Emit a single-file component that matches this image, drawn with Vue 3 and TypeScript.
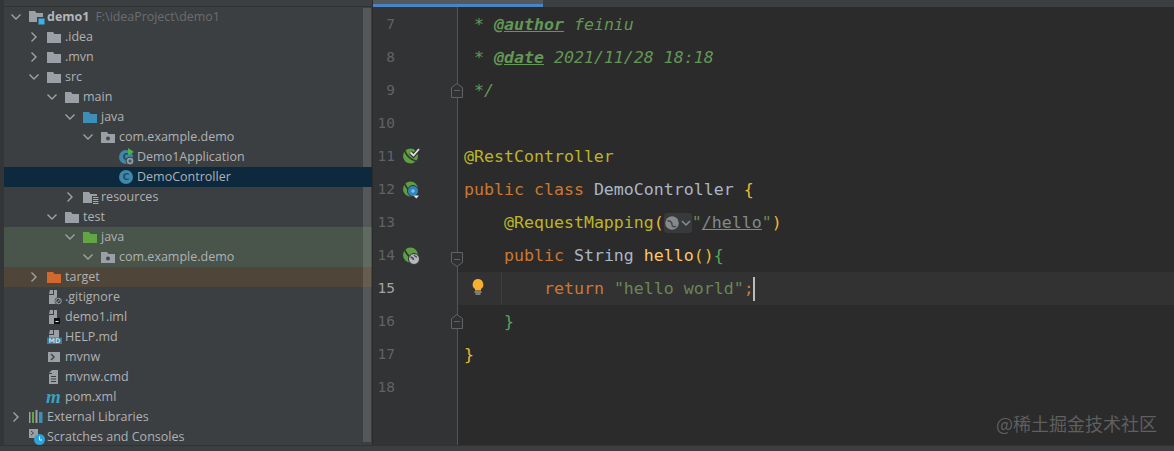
<script setup lang="ts">
interface Row { name: string; depth: number; icon: string; open?: boolean; chev?: boolean; hint?: string; cls?: string }
interface Tok { t: string; c: string }
interface Line { n: number; toks: Tok[]; bean?: string; fold?: string; current?: boolean; bulb?: boolean }

const rows: Row[] = [
  { name: 'demo1', depth: 0, icon: 'module', chev: true, open: true, hint: 'F:\\ideaProject\\demo1', cls: 'root-row' },
  { name: '.idea', depth: 1, icon: 'folder', chev: true },
  { name: '.mvn', depth: 1, icon: 'folder', chev: true },
  { name: 'src', depth: 1, icon: 'folder', chev: true, open: true },
  { name: 'main', depth: 2, icon: 'folder', chev: true, open: true },
  { name: 'java', depth: 3, icon: 'blue', chev: true, open: true },
  { name: 'com.example.demo', depth: 4, icon: 'package', chev: true, open: true },
  { name: 'Demo1Application', depth: 5, icon: 'app' },
  { name: 'DemoController', depth: 5, icon: 'class', cls: 'selected' },
  { name: 'resources', depth: 3, icon: 'resources', chev: true },
  { name: 'test', depth: 2, icon: 'folder', chev: true, open: true },
  { name: 'java', depth: 3, icon: 'green', chev: true, open: true, cls: 'tint-green' },
  { name: 'com.example.demo', depth: 4, icon: 'package', chev: true, open: true, cls: 'tint-green' },
  { name: 'target', depth: 1, icon: 'orange', chev: true, cls: 'tint-orange' },
  { name: '.gitignore', depth: 1, icon: 'ignore' },
  { name: 'demo1.iml', depth: 1, icon: 'iml' },
  { name: 'HELP.md', depth: 1, icon: 'md' },
  { name: 'mvnw', depth: 1, icon: 'script' },
  { name: 'mvnw.cmd', depth: 1, icon: 'text' },
  { name: 'pom.xml', depth: 1, icon: 'pom' },
  { name: 'External Libraries', depth: 0, icon: 'libs', chev: true },
  { name: 'Scratches and Consoles', depth: 0, icon: 'scratch' },
]

const lines: Line[] = [
  { n: 7, toks: [{ t: ' * ', c: 'doc' }, { t: '@author', c: 'tag' }, { t: ' feiniu', c: 'doc' }] },
  { n: 8, toks: [{ t: ' * ', c: 'doc' }, { t: '@date', c: 'tag' }, { t: ' 2021/11/28 18:18', c: 'doc' }] },
  { n: 9, toks: [{ t: ' */', c: 'doc' }], fold: 'end' },
  { n: 10, toks: [] },
  { n: 11, toks: [{ t: '@RestController', c: 'ann' }], bean: 'check' },
  { n: 12, toks: [{ t: 'public class', c: 'kw' }, { t: ' DemoController ', c: 'pl' }, { t: '{', c: 'br' }], bean: 'down' },
  { n: 13, toks: [{ t: '    ', c: 'pl' }, { t: '@RequestMapping', c: 'ann' }, { t: '(', c: 'br' }, { t: '', c: 'inlay' }, { t: '"', c: 'str' }, { t: '/hello', c: 'url' }, { t: '"', c: 'str' }, { t: ')', c: 'br' }] },
  { n: 14, toks: [{ t: '    ', c: 'pl' }, { t: 'public', c: 'kw' }, { t: ' String ', c: 'pl' }, { t: 'hello', c: 'fn' }, { t: '()', c: 'br' }, { t: '{', c: 'gbr' }], bean: 'globe', fold: 'start' },
  { n: 15, toks: [{ t: '        ', c: 'pl' }, { t: 'return', c: 'kw' }, { t: ' "hello world"', c: 'str' }, { t: ';', c: 'kw' }], current: true, bulb: true },
  { n: 16, toks: [{ t: '    ', c: 'pl' }, { t: '}', c: 'gbr' }], fold: 'end' },
  { n: 17, toks: [{ t: '}', c: 'br' }] },
  { n: 18, toks: [] },
]

const indent = (d: number) => ({ paddingLeft: `${4 + 18 * d}px` })
const folderFill: Record<string, string> = { folder: '#9aa0a5', blue: '#3d8fb5', green: '#62a544', orange: '#d0682f', package: '#9aa0a5', resources: '#9aa0a5' }
</script>

<template>
  <div class="screen">
    <div class="main">
      <aside class="tree">
        <div class="tree-top"></div>
        <div v-for="(r, i) in rows" :key="i" class="row" :class="r.cls" :style="indent(r.depth)">
          <span class="chev">
            <svg v-if="r.chev" width="16" height="16" viewBox="0 0 16 16" fill="none" stroke="#a0a3a5" stroke-width="1.4">
              <path v-if="r.open" d="M3.500 5.500 8 10l4.500-4.500" />
              <path v-else d="M5.500 3.500 10 8l-4.500 4.500" />
            </svg>
          </span>
          <svg class="ico" width="16" height="16" viewBox="0 0 16 16">
            <template v-if="folderFill[r.icon]">
              <path d="M0 3h6l1.500 2H14v9H0z" :fill="folderFill[r.icon]" />
              <circle v-if="r.icon === 'package'" cx="7" cy="9.500" r="2" fill="#43474a" />
              <g v-if="r.icon === 'resources'">
                <path d="M9 7h7v9H9z" fill="#3c3f41" />
                <path d="M10 8.500h5.500M10 10.500h5.500M10 12.500h5.500M10 14.500h5.500" stroke="#e0a63a" stroke-width="1" />
              </g>
            </template>
            <g v-else-if="r.icon === 'module'">
              <path d="M0 2h6l1.500 2H14v9H0z" fill="#9aa0a5" />
              <path d="M8 8h8v8H8z" fill="#3c3f41" />
              <path d="M9.500 9.500h6v6h-6z" fill="#38b4e4" />
            </g>
            <g v-else-if="r.icon === 'class' || r.icon === 'app'">
              <circle cx="7" cy="8" r="7" fill="#3f88a8" />
              <text x="7" y="11" text-anchor="middle" class="c-letter">C</text>
              <g v-if="r.icon === 'app'">
                <path d="M9 -1 15 3l-6 3z" fill="#4fb04a" />
                <circle cx="11" cy="12" r="4" fill="#8b9aa3" stroke="#3c3f41" />
                <circle cx="11" cy="12" r="1.500" fill="#4a5660" />
              </g>
            </g>
            <g v-else-if="r.icon === 'ignore'">
              <path d="M3 1h3v4H2zM7 1h3v14H2V6h5z" fill="#9aa0a5" />
              <circle cx="11.500" cy="12" r="3.800" fill="#3c3f41" />
              <circle cx="11.500" cy="12" r="2.800" fill="none" stroke="#9aa0a5" />
              <path d="m9.500 14 4-4" stroke="#9aa0a5" />
            </g>
            <g v-else-if="r.icon === 'iml'">
              <path d="M3 1h3v4H2zM7 1h3v14H2V6h5z" fill="#9aa0a5" />
              <path d="M7 9h6v6H7z" fill="#111" />
              <path d="M8.500 12.500h3" stroke="#eee" stroke-width="1" />
            </g>
            <g v-else-if="r.icon === 'md'">
              <path d="M3 1h3v4H2zM7 1h5v8H2V6h5z" fill="#9aa0a5" />
              <path d="M0 8.500h15V15H0z" fill="#2f7f9f" />
              <text x="7.500" y="14.200" text-anchor="middle" class="md-letter">MD</text>
            </g>
            <g v-else-if="r.icon === 'script'">
              <path d="M1 3h12v10H1z" fill="#9aa0a5" />
              <path d="m4 5 3 3-3 3" fill="none" stroke="#43474a" stroke-width="1.500" />
            </g>
            <g v-else-if="r.icon === 'text'">
              <path d="M5 1h6v14H2V5h3z" fill="#9aa0a5" />
              <path d="M2 4l3-3v3z" fill="#9aa0a5" />
              <path d="M4 7.500h5M4 10h5M4 12.500h5" stroke="#3c3f41" />
            </g>
            <text v-else-if="r.icon === 'pom'" x="-1" y="13.500" class="m-letter">m</text>
            <g v-else-if="r.icon === 'libs'">
              <path d="M0 3h1.500v11H0z" fill="#9aa0a5" />
              <path d="M3 3h2v11H3z" fill="#62a544" />
              <path d="M6.500 1h2v13h-2z" fill="#9aa0a5" />
              <path d="M10 3h3.500v11H10z" fill="#3d8fb5" />
            </g>
            <g v-else-if="r.icon === 'scratch'">
              <path d="M0 0h9v9H0z" fill="#9aa0a5" />
              <path d="m2 2 2.500 2L2 6" fill="none" stroke="#43474a" />
              <circle cx="10.500" cy="10.500" r="5.500" fill="#2fa3dc" />
              <path d="M10.500 7.500v3.500h2.500" fill="none" stroke="#dff" />
            </g>
          </svg>
          <span class="name">{{ r.name }}</span>
          <span v-if="r.hint" class="hint">{{ r.hint }}</span>
        </div>
        <div class="scrollbar"></div>
      </aside>

      <section class="editor">
        <div class="tabs"><div class="tab"></div></div>
        <div class="code">
          <div v-for="l in lines" :key="l.n" class="line" :class="{ current: l.current }">
            <div class="gutter">
              <span class="num">{{ l.n }}</span>
              <svg v-if="l.bean" class="bean" width="18" height="18" viewBox="0 0 18 18">
                <circle cx="8.500" cy="8" r="7.500" fill="#5f9f42" />
                <path d="M2.500 2.500c2 5 6 9 12 11" fill="none" stroke="#2f3a2c" stroke-width="1.800" />
                <g v-if="l.bean === 'check'">
                  <path d="m8.500 4.500 3 3 5.500-6.500" fill="none" stroke="#313335" stroke-width="4" />
                  <path d="m8.500 4.500 3 3 5.500-6.500" fill="none" stroke="#e4e4e4" stroke-width="1.800" />
                </g>
                <g v-if="l.bean === 'down'">
                  <circle cx="11" cy="10" r="5.500" fill="#2f86bd" stroke="#313335" />
                  <circle cx="11" cy="10" r="1.800" fill="#7fc0e8" />
                  <path d="m11.500 14.500 5.500 0-2.700 3z" fill="#eee" />
                </g>
                <g v-if="l.bean === 'globe'">
                  <circle cx="12" cy="12" r="5.500" fill="#b4b8bb" stroke="#313335" />
                  <path d="M8.500 10c2 .5 3 1 3 3M12 8c1 1 1.500 2 3 2" fill="none" stroke="#46494b" stroke-width="1.300" />
                </g>
              </svg>
            </div>
            <div class="text">
              <template v-for="(tk, i) in l.toks" :key="i">
                <span v-if="tk.c === 'inlay'" class="inlay">
                  <svg width="28" height="18" viewBox="0 0 28 18">
                    <circle cx="8" cy="9" r="6.800" fill="#85898c" />
                    <path d="M3.500 6.500c3 .5 4.500 1.500 4.500 4s2.500 3 4 1.500" fill="none" stroke="#46494b" stroke-width="1.500" />
                    <path d="m18 7 4 4 4-4" fill="none" stroke="#8b8e90" stroke-width="1.500" />
                  </svg>
                </span>
                <span v-else :class="tk.c">{{ tk.t }}</span>
              </template>
              <i v-if="l.current" class="caret"></i>
            </div>
            <i v-if="l.current" class="guide"></i>
            <svg v-if="l.bulb" class="bulb" width="14" height="18" viewBox="0 0 14 18">
              <path d="M7 0a5.500 5.500 0 0 0-3 10v1.500h6V10A5.500 5.500 0 0 0 7 0z" fill="#f5b02f" />
              <path d="M3.500 13h7M4.500 15h5" stroke="#c8c8c8" stroke-width="1.200" />
            </svg>
            <svg v-if="l.fold" class="fold" :class="l.fold" width="12" height="15" viewBox="0 0 12 15" fill="#2f3133" stroke="#606366">
              <path v-if="l.fold === 'end'" d="M.5 14.500v-10L6 .5l5.500 4v10z" />
              <path v-else d="M.5.500v10l5.500 4 5.500-4V.5z" />
              <path d="M3 7.500h6" />
            </svg>
          </div>
        </div>
        <div class="watermark">@稀土掘金技术社区</div>
      </section>
    </div>
    <div class="status"></div>
  </div>
</template>

<style>
html, body { margin: 0; background: #2b2b2b; }
</style>

<style scoped>
.screen { width: 1174px; height: 451px; overflow: hidden; display: flex; flex-direction: column; }
.main { height: 445px; display: flex; overflow: hidden; }
.tree { position: relative; width: 368px; flex: none; border-left: 4px solid #333537; background: #3c3f41; font: 12.5px/20px "Open Sans", "Noto Sans", sans-serif; color: #afb1b3; }
.tree-top { height: 6px; border-bottom: 1px solid #323232; }
.row { height: 20px; display: flex; align-items: center; white-space: nowrap; box-sizing: border-box; }
.chev { width: 16px; height: 16px; margin-right: 5px; flex: none; }
.ico { margin-right: 2px; flex: none; overflow: visible; }
.hint { margin-left: 6px; color: #6a6d6f; font-size: 12.400px; }
.root-row .name { font-weight: 700; color: #b4b6b8; }
.selected { background: #0d293e; position: relative; z-index: 2; }
.tint-green { background: #49544a; }
.tint-orange { background: #4f4539; }
.scrollbar { position: absolute; top: 8px; right: 1px; bottom: 3px; width: 8px; background: rgba(255, 255, 255, 0.13); }
.c-letter { font: 700 9px "DejaVu Sans", sans-serif; fill: #1f4a5e; }
.md-letter { font: 700 6.500px "DejaVu Sans", sans-serif; fill: #c8dce6; }
.m-letter { font: italic 700 19px "Liberation Serif", serif; fill: #3b9fbf; }

.editor { position: relative; flex: 1; border-left: 1px solid #2b2b2b; background: #2b2b2b; display: flex; flex-direction: column; }
.tabs { height: 7px; flex: none; background: #3c3f41; }
.tab { width: 170px; height: 7px; box-sizing: border-box; background: #53595a; border-bottom: 3px solid #4a84c4; }
.code { flex: 1; padding-top: 1px; background: linear-gradient(90deg, #313335 84px, #555 84px, #555 85px, #2b2b2b 85px); font: 16.600px/33px "DejaVu Sans Mono", monospace; }
.line { position: relative; height: 33px; display: flex; }
.gutter { width: 85px; flex: none; display: flex; align-items: center; }
.num { width: 22px; text-align: right; font-size: 14.500px; color: #606366; }
.bean { margin-left: 7px; }
.text { margin-left: 6px; white-space: pre; display: flex; align-items: center; }
.current .text { flex: 1; margin-left: 0; padding-left: 6px; background: #323232; }
.current .num { color: #a4a3a3; }
.doc { color: #629755; font-style: italic; }
.tag { color: #629755; font-style: italic; font-weight: 700; text-decoration: underline; }
.ann { color: #bbb529; }
.kw { color: #cc7832; }
.pl { color: #a9b7c6; }
.br { color: #e8ba36; }
.gbr { color: #54a857; }
.fn { color: #ffc66d; }
.str { color: #6a8759; }
.url { color: #7f8c8d; text-decoration: underline; }
.inlay { display: inline-flex; width: 28px; height: 20px; align-items: center; background: #37393a; border-radius: 3px; }
.caret { width: 2px; height: 24px; margin-left: -1px; background: #bbb; }
.guide { position: absolute; left: 128px; top: 0; width: 1px; height: 33px; background: #3d3d3d; }
.bulb { position: absolute; left: 98px; top: 7px; }
.fold { position: absolute; left: 78px; top: 9px; }
.fold.start { top: 13px; }
.status { height: 5px; border-top: 1px solid #323232; background: #3c3f41; }
.watermark { position: absolute; right: 17px; bottom: 11px; font: 18px/22px "Noto Sans CJK SC", sans-serif; color: rgba(255, 255, 255, 0.25); }
</style>
